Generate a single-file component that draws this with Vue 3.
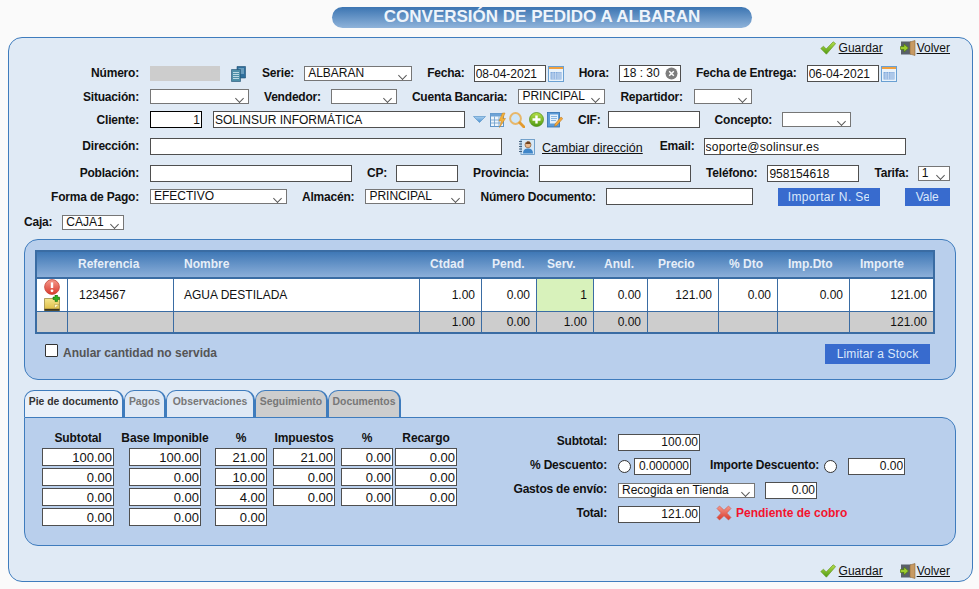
<script setup>
const columns = [
  { label: '', width: 31 }, { label: 'Referencia', width: 106 }, { label: 'Nombre', width: 246 },
  { label: 'Ctdad', width: 62 }, { label: 'Pend.', width: 55 }, { label: 'Serv.', width: 57 },
  { label: 'Anul.', width: 54 }, { label: 'Precio', width: 71 }, { label: '% Dto', width: 59 },
  { label: 'Imp.Dto', width: 72 }, { label: 'Importe', width: 83 }
]
const totals = ['1.00', '0.00', '1.00', '0.00', '', '', '', '121.00']
const tabs = [
  { label: 'Pie de documento', cls: 't-active' }, { label: 'Pagos', cls: 't-open' },
  { label: 'Observaciones', cls: 't-open' }, { label: 'Seguimiento', cls: 't-off' },
  { label: 'Documentos', cls: 't-off' }
]
const taxHead = ['Subtotal', 'Base Imponible', '%', 'Impuestos', '%', 'Recargo']
const taxCls = ['c72', 'c72', 'c52', 'c62', 'c52', 'c62']
const taxRows = [
  ['100.00', '100.00', '21.00', '21.00', '0.00', '0.00'],
  ['0.00', '0.00', '10.00', '0.00', '0.00', '0.00'],
  ['0.00', '0.00', '4.00', '0.00', '0.00', '0.00'],
  ['0.00', '0.00', '0.00']
]
</script>

<template>
  <div class="page">
    <svg class="defs" aria-hidden="true">
      <defs>
        <linearGradient id="gBlue" x1="0" y1="0" x2="0" y2="1"><stop offset="0" stop-color="#a9d0f0"/><stop offset="1" stop-color="#4a90d0"/></linearGradient>
        <linearGradient id="gGreen" x1="0" y1="0" x2="0" y2="1"><stop offset="0" stop-color="#b6e04a"/><stop offset="1" stop-color="#4f9a12"/></linearGradient>
        <linearGradient id="gRed" x1="0" y1="0" x2="0" y2="1"><stop offset="0" stop-color="#f59a8c"/><stop offset="1" stop-color="#d9392c"/></linearGradient>
        <linearGradient id="gNote" x1="0" y1="0" x2="0" y2="1"><stop offset="0" stop-color="#f5e68c"/><stop offset="1" stop-color="#dcb940"/></linearGradient>
      </defs>
      <symbol id="i-check" viewBox="0 0 16 14">
        <path d="M0.8 7.5 3.5 5.2 6.2 8 13.2 0.8 15.6 2.6 6.4 13.2Z" fill="url(#gGreen)" stroke="#6a9a2a" stroke-width=".7"/>
      </symbol>
      <symbol id="i-door" viewBox="0 0 16 16">
        <rect x="1" y="1.5" width="10" height="13" fill="#59606a"/>
        <path d="M10 2 15 0.5V15.5L10 14Z" fill="#c79a63" stroke="#8f6a3a" stroke-width=".6"/>
        <path d="M0.5 6.5H4V4L8.5 8 4 12V9.5H0.5Z" fill="#9ccc2e" stroke="#4d7a10" stroke-width=".7"/>
      </symbol>
      <symbol id="i-cal" viewBox="0 0 16 16">
        <rect x=".5" y=".5" width="15" height="15" fill="#eaf3fb" stroke="#6aa0d2"/>
        <rect x="1" y="1" width="14" height="2" fill="#f0a040"/>
        <path d="M2.5 6H13.5V13.5H2.5Z" fill="#7fa9dc"/>
        <path d="M2.5 8H13.5M2.5 10H13.5M2.5 12H13.5M5 6V13.5M7.5 6V13.5M10 6V13.5M12 6V13.5" stroke="#dbe8f6" stroke-width=".6"/>
      </symbol>
    </svg>

    <h1 class="title">CONVERSIÓN DE PEDIDO A ALBARAN</h1>

    <section class="panel">
      <nav class="actions">
        <a class="act"><svg class="ic-check"><use href="#i-check"/></svg>Guardar</a>
        <a class="act"><svg class="ic-door"><use href="#i-door"/></svg>Volver</a>
      </nav>

      <div class="row r23 raised">
        <label class="lead">Número:</label>
        <div class="grey"></div>
        <svg class="ic-docs" viewBox="0 0 15 16">
          <path d="M6 .5H14.5V12H6Z" fill="#2f6f9c" stroke="#1f4f72" stroke-width=".6"/>
          <path d="M7.5 3H13M7.5 5H13M7.5 7H13" stroke="#bfe0ee" stroke-width=".8"/>
          <path d="M.5 3.5H9.5V15.5H.5Z" fill="#4d8fa8" stroke="#1f4f72" stroke-width=".6"/>
          <path d="M2 6.5H8M2 8.5H8M2 10.5H8M2 12.5H8" stroke="#d5ecf3" stroke-width=".8"/>
        </svg>
        <label class="lab l-serie">Serie:</label>
        <div class="sel w108">ALBARAN</div>
        <label class="lab tight">Fecha:</label>
        <input class="inp w72" value="08-04-2021" readonly />
        <svg class="ic-cal"><use href="#i-cal"/></svg>
        <label class="lab">Hora:</label>
        <div class="inp time w62"><span>18 : 30</span>
          <svg class="ic-clear" viewBox="0 0 13 13"><circle cx="6.5" cy="6.5" r="6" fill="#7d7d7d"/><path d="M4.2 4.2 8.8 8.8M8.8 4.2 4.2 8.8" stroke="#fff" stroke-width="1.5"/></svg>
        </div>
        <label class="lab">Fecha de Entrega:</label>
        <input class="inp w72" value="06-04-2021" readonly />
        <svg class="ic-cal"><use href="#i-cal"/></svg>
      </div>

      <div class="row r23">
        <label class="lead">Situación:</label>
        <div class="sel w99"></div>
        <label class="lab">Vendedor:</label>
        <div class="sel w66"></div>
        <label class="lab wide">Cuenta Bancaria:</label>
        <div class="sel w87">PRINCIPAL</div>
        <label class="lab wide">Repartidor:</label>
        <div class="sel w58"></div>
      </div>

      <div class="row r23">
        <label class="lead">Cliente:</label>
        <input class="inp w52 num strong" value="1" readonly />
        <input class="inp w252 gap11" value="SOLINSUR INFORMÁTICA" readonly />
        <svg class="ic-tri" viewBox="0 0 13 7"><path d="M.5.5H12.5L6.5 6.5Z" fill="url(#gBlue)" stroke="#5d97c9" stroke-width=".7"/></svg>
        <svg class="ic-16 ic-table" viewBox="0 0 16 16">
          <rect x=".5" y="1.5" width="13" height="13" fill="#eef5fb" stroke="#5f95c9"/>
          <rect x=".5" y="1.5" width="13" height="3" fill="#6ea3d6"/>
          <path d="M.5 8H13.5M.5 11H13.5M4.5 4.5V14.5M9 4.5V14.5" stroke="#6a9ccc" stroke-width=".8"/>
          <path d="M12.5 1 9 9H11.5L9.5 15.5 15.5 6.5H12.8L15 1Z" fill="#f3b23c" stroke="#c9801c" stroke-width=".5"/>
        </svg>
        <svg class="ic-16 ic-mag" viewBox="0 0 16 16">
          <circle cx="6.5" cy="6.5" r="5.4" fill="#cfe6f8" stroke="#e7b76a" stroke-width="2"/>
          <path d="M10.8 10.8 15 15" stroke="#e39a2e" stroke-width="2.8" stroke-linecap="round"/>
        </svg>
        <svg class="ic-plus" viewBox="0 0 15 15">
          <circle cx="7.5" cy="7.5" r="7" fill="url(#gGreen)" stroke="#4b8a12" stroke-width=".7"/>
          <path d="M7.5 3.5V11.5M3.5 7.5H11.5" stroke="#fff" stroke-width="2.4"/>
        </svg>
        <svg class="ic-16 ic-note" viewBox="0 0 16 16">
          <rect x=".5" y=".5" width="12" height="14.5" fill="#5b9bd8" stroke="#2f6fae" stroke-width=".8"/>
          <rect x="3" y="2.5" width="8" height="9" fill="#e4f0fa"/>
          <path d="M4 4.5H10M4 6.5H10M4 8.5H9" stroke="#5b9bd8" stroke-width=".7"/>
          <path d="M8 12 14 5 15.8 6.6 9.8 13.5 7.6 14.4Z" fill="#f2a93b" stroke="#b9711b" stroke-width=".5"/>
        </svg>
        <label class="lab l-cif">CIF:</label>
        <input class="inp w92" readonly />
        <label class="lab">Concepto:</label>
        <div class="sel w69"></div>
      </div>

      <div class="row r31 raised">
        <label class="lead">Dirección:</label>
        <input class="inp w352" readonly />
        <svg class="ic-16 ic-addr" viewBox="0 0 16 16">
          <rect x="2" y=".5" width="13.5" height="15" fill="#d6e8f7" stroke="#5a8fc0" stroke-width=".8"/>
          <path d="M0 2.5H3M0 5H3M0 7.5H3M0 10H3M0 12.5H3" stroke="#44617c" stroke-width="1"/>
          <circle cx="9" cy="5.8" r="3" fill="#e9b98f" stroke="#7a4a24" stroke-width=".6"/>
          <path d="M8.2 2.6H10.6L11.6 5H6.6Z" fill="#6d4221"/>
          <path d="M4 14.5C4 10.5 6.5 9.5 9 9.5S14 10.5 14 14.5Z" fill="#3f86c9"/>
        </svg>
        <a class="link">Cambiar dirección</a>
        <label class="lab l-email tight">Email:</label>
        <input class="inp w202 mail" value="soporte@solinsur.es" readonly />
      </div>

      <div class="row r23 raised">
        <label class="lead">Población:</label>
        <input class="inp w202" readonly />
        <label class="lab tight">CP:</label>
        <input class="inp w62" readonly />
        <label class="lab">Provincia:</label>
        <input class="inp w152" readonly />
        <label class="lab">Teléfono:</label>
        <input class="inp w92" value="958154618" readonly />
        <label class="lab tight">Tarifa:</label>
        <div class="sel w32">1</div>
      </div>

      <div class="row r23">
        <label class="lead">Forma de Pago:</label>
        <div class="sel w137">EFECTIVO</div>
        <label class="lab wide">Almacén:</label>
        <div class="sel w100">PRINCIPAL</div>
        <label class="lab">Número Documento:</label>
        <input class="inp w147" readonly />
        <button class="btn b-imp"><span>Importar N. Serie</span></button>
        <button class="btn b-vale">Vale</button>
      </div>

      <div class="row r28">
        <label class="lab l-caja">Caja:</label>
        <div class="sel w62">CAJA1</div>
      </div>

      <section class="box lines">
        <table class="grid">
          <colgroup><col v-for="c in columns" :key="c.label" :style="{ width: c.width + 'px' }" /></colgroup>
          <thead>
            <tr><th v-for="c in columns" :key="c.label">{{ c.label }}</th></tr>
          </thead>
          <tbody>
            <tr class="item">
              <td class="flags">
                <svg class="ic-alert" viewBox="0 0 16 16">
                  <circle cx="8" cy="8" r="7.4" fill="url(#gRed)" stroke="#c5463a" stroke-width=".8"/>
                  <path d="M8 3.4V9" stroke="#fff" stroke-width="2.4"/><circle cx="8" cy="11.8" r="1.4" fill="#fff"/>
                </svg>
                <svg class="ic-addnote" viewBox="0 0 16 16">
                  <path d="M0.5 3.5H15.5V15.5H0.5Z" fill="url(#gNote)" stroke="#7c6a1c" stroke-width=".6"/>
                  <path d="M0.5 13.8H15.5V15.8H0.5Z" fill="#3c3520"/>
                  <path d="M10.5 13.5 15 9.5 10.5 9.5Z" fill="#fff6c8" stroke="#a08a30" stroke-width=".4"/>
                  <path d="M11 0H13.5V2H15.5V4.5H13.5V6.5H11V4.5H9V2H11Z" fill="#2fae1e" stroke="#0d5a0a" stroke-width=".5"/>
                </svg>
              </td>
              <td class="txt first">1234567</td>
              <td class="txt">AGUA DESTILADA</td>
              <td class="n">1.00</td>
              <td class="n">0.00</td>
              <td class="n serv">1</td>
              <td class="n">0.00</td>
              <td class="n">121.00</td>
              <td class="n">0.00</td>
              <td class="n">0.00</td>
              <td class="n">121.00</td>
            </tr>
            <tr class="sum">
              <td></td><td></td><td></td>
              <td v-for="(t, i) in totals" :key="i" class="n">{{ t }}</td>
            </tr>
          </tbody>
        </table>
        <div class="below">
          <label class="cancel"><span class="check"></span>Anular cantidad no servida</label>
          <button class="btn b-limit">Limitar a Stock</button>
        </div>
      </section>

      <div class="tabs">
        <div v-for="t in tabs" :key="t.label" class="tab" :class="t.cls">{{ t.label }}</div>
      </div>

      <section class="box foot">
        <div class="taxes">
          <div v-for="(h, i) in taxHead" :key="i" class="tax-h" :class="taxCls[i]"><span>{{ h }}</span></div>
          <template v-for="(r, ri) in taxRows" :key="ri">
            <input v-for="(v, i) in r" :key="i" class="inp num tax" :class="taxCls[i]" :value="v" readonly />
          </template>
        </div>
        <div class="sums">
          <div class="s-row">
            <label class="s-lab">Subtotal:</label>
            <input class="inp num w82 sum-inp" value="100.00" readonly />
          </div>
          <div class="s-row">
            <label class="s-lab">% Descuento:</label>
            <span class="radio"></span>
            <input class="inp num w57 sum-inp r-dto" value="0.000000" readonly />
            <label class="lab l-imp">Importe Descuento:</label>
            <span class="radio r2"></span>
            <input class="inp num w57 sum-inp" value="0.00" readonly />
          </div>
          <div class="s-row">
            <label class="s-lab">Gastos de envío:</label>
            <div class="sel w137 s-env">Recogida en Tienda</div>
            <input class="inp num w52 sum-inp" value="0.00" readonly />
          </div>
          <div class="s-row">
            <label class="s-lab">Total:</label>
            <input class="inp num w82 sum-inp" value="121.00" readonly />
            <svg class="ic-x" viewBox="0 0 16 16">
              <path d="M1 3.5 3.5 1 8 5.2 12.5 1 15 3.5 10.8 8 15 12.5 12.5 15 8 10.8 3.5 15 1 12.5 5.2 8Z" fill="url(#gRed)" stroke="#d0584c" stroke-width=".6"/>
            </svg>
            <span class="pending">Pendiente de cobro</span>
          </div>
        </div>
      </section>

      <nav class="actions bottom">
        <a class="act"><svg class="ic-check"><use href="#i-check"/></svg>Guardar</a>
        <a class="act"><svg class="ic-door"><use href="#i-door"/></svg>Volver</a>
      </nav>
    </section>
  </div>
</template>

<style>
html, body { margin: 0; background: #fafafa; }
</style>

<style scoped>
* { box-sizing: border-box; }
.page {
  width: 979px; height: 589px; overflow: hidden; padding-top: 7px;
  background: #fafafa; color: #111;
  font-family: "Liberation Sans", Arial, sans-serif; font-size: 12px;
}
.defs { position: absolute; width: 0; height: 0; }
.title {
  width: 420px; height: 21px; margin: 0 0 0 332px; border-radius: 11px;
  background: linear-gradient(#3c75b2, #8fb3da);
  color: #eef4fb; font-size: 17px; font-weight: bold; line-height: 20px; text-align: center;
}
.panel {
  width: 965px; height: 545px; margin: 9px 0 0 8px;
  border: 1px solid #3f7cbd; border-radius: 14px; background: #e0eaf5;
}
.actions { display: flex; justify-content: flex-end; gap: 17px; height: 24px; padding: 2px 22px 0 0; }
.actions.bottom { height: 20px; padding-top: 0; margin-top: 17px; }
.act { display: flex; align-items: center; height: 16px; font-size: 12px; color: #111; text-decoration: underline; }
.ic-check { width: 16px; height: 14px; margin-right: 3px; }
.ic-door { width: 16px; height: 16px; margin-right: 1px; }

.row { display: flex; align-items: center; }
.r23 { height: 23px; }
.r28 { height: 28px; }
.r31 { height: 31px; }
.lead { width: 130px; margin-right: 11px; font-weight: bold; text-align: right; white-space: nowrap; letter-spacing: -.2px; }
.lab { margin-left: 15px; margin-right: 10px; font-weight: bold; white-space: nowrap; letter-spacing: -.2px; }
.raised .lead, .raised .lab { margin-top: -2px; }
.tight { margin-right: 9px; }
.wide { margin-right: 11px; }
.l-serie { margin-left: 16px; }
.l-cif { margin-right: 7px; }
.l-email { margin-left: 17px; }

.grey { width: 70px; height: 15px; background: #cdcdcd; }
.inp {
  height: 17px; padding: 0 1px; border: 1px solid #4f4f4f; background: #fff; color: #111;
  font-family: inherit; font-size: 12px; line-height: 15px; outline: none; border-radius: 0;
}
.num { text-align: right; }
.mail { letter-spacing: .25px; }
.strong { border-color: #000; }
.gap11 { margin-left: 11px; }
.sel {
  position: relative; height: 15px; padding-left: 3px; border: 1px solid #767676; background: #fff;
  font-size: 12px; line-height: 13px; color: #111; white-space: nowrap;
}
.sel::after {
  content: ""; position: absolute; right: 5px; top: 5px; width: 6px; height: 6px;
  border-right: 1px solid #555; border-bottom: 1px solid #555; transform: rotate(45deg) scale(.9);
}
.w32 { width: 32px; } .w52 { width: 52px; } .w57 { width: 57px; } .w58 { width: 58px; }
.w62 { width: 62px; } .w66 { width: 66px; } .w69 { width: 69px; }
.w72 { width: 72px; } .w82 { width: 82px; } .w87 { width: 87px; } .w92 { width: 92px; }
.w99 { width: 99px; } .w100 { width: 100px; } .w108 { width: 108px; }
.w137 { width: 137px; } .w147 { width: 147px; } .w152 { width: 152px; } .w202 { width: 202px; }
.w252 { width: 252px; } .w352 { width: 352px; }
.c72 { width: 72px; } .c52 { width: 52px; } .c62 { width: 62px; }

.time { display: flex; align-items: center; justify-content: space-between; padding: 0 2px 0 3px; }
.ic-clear { width: 13px; height: 13px; }
.ic-docs { width: 15px; height: 16px; margin-left: 11px; }
.ic-cal { width: 16px; height: 16px; margin-left: 2px; }
.ic-tri { width: 13px; height: 7px; margin-left: 8px; }
.ic-16 { width: 16px; height: 16px; }
.ic-table { margin-left: 4px; }
.ic-mag { margin-left: 3px; }
.ic-plus { width: 15px; height: 15px; margin-left: 4px; }
.ic-note { margin-left: 3px; }
.ic-addr { margin-left: 17px; }
.link { margin-left: 7px; font-size: 12.5px; color: #111; text-decoration: underline; position: relative; top: 1px; }

.btn {
  height: 18px; padding: 0; border: 0; border-radius: 0; background: #386bce; color: #dbe8fb;
  font-family: inherit; font-size: 12px; line-height: 18px;
}
.b-imp { width: 102px; margin-left: 25px; padding: 0 11px 0 10px; overflow: hidden; text-align: left; letter-spacing: .35px; }
.b-imp span { display: block; overflow: hidden; white-space: nowrap; }
.b-vale { width: 45px; margin-left: 25px; }
.b-limit { width: 105px; height: 20px; letter-spacing: .15px; }

.box { border: 1px solid #3f7cbd; background: #b9cfec; }
.lines { width: 932px; height: 141px; margin: 3px 0 0 15px; padding: 10px 0 0 10px; border-radius: 14px; }
.grid {
  width: 900px; table-layout: fixed; border-collapse: separate; border-spacing: 0;
  border: 2px solid #3a6ca3; background: #fff; font-size: 12px;
}
.grid th {
  height: 27px; padding: 0 0 2px 10px; border-bottom: 2px solid #3a6ca3; text-align: left;
  background: linear-gradient(#3f78b6, #8cafd9); color: #e6eef8; font-weight: bold;
}
.grid td { padding: 0; border-right: 1px solid #3a6ca3; border-bottom: 1px solid #3a6ca3; }
.grid td:last-child { border-right: 0; }
.grid tr:last-child td { border-bottom: 0; }
.item td { height: 33px; }
.sum td { height: 20px; background: #cdcdcd; }
.txt { padding-left: 10px !important; }
.txt.first { padding-left: 11px !important; }
.n { padding-right: 6px !important; text-align: right; }
.serv { background: #d8f2bb; }
.flags { position: relative; }
.ic-alert { position: absolute; left: 7px; top: 0; width: 16px; height: 16px; }
.ic-addnote { position: absolute; left: 7px; top: 16px; width: 16px; height: 16px; }
.below { display: flex; justify-content: space-between; align-items: flex-start; padding: 10px 25px 0 10px; }
.cancel { display: flex; align-items: flex-start; line-height: 18px; color: #555; font-weight: bold; }
.check { width: 13px; height: 13px; margin-right: 5px; border: 1px solid #333; background: #fff; border-radius: 1px; }

.tabs { display: flex; height: 27px; margin: 10px 0 0 15px; position: relative; z-index: 1; }
.tab {
  height: 27px; padding-top: 5px; border: 1px solid #3f7cbd; border-bottom: 0; border-radius: 10px 10px 0 0;
  border-width: 1px 2px 0 1px; font-size: 10.4px; font-weight: bold; text-align: center; white-space: nowrap;
}
.tab:nth-child(1) { width: 100px; }
.tab:nth-child(2) { width: 42px; }
.tab:nth-child(3) { width: 89px; }
.tab:nth-child(4) { width: 73px; }
.tab:nth-child(5) { width: 73px; }
.t-active { background: #e9f0f9; color: #333; }
.t-open { background: #dfe9f5; color: #777; }
.t-off { background: #cdcdcd; color: #777; }

.foot {
  display: flex; width: 932px; height: 129px; margin-left: 15px; padding: 13px 0 0 17px;
  border-radius: 0 14px 14px 14px;
}
.taxes {
  display: grid; grid-template-columns: 87px 86px 58px 68px 54px 62px; grid-auto-rows: 20px;
  align-items: start; width: 415px; height: 100px; grid-template-rows: 17px;
}
.tax-h { display: flex; justify-content: center; font-weight: bold; white-space: nowrap; letter-spacing: -.1px; }
.tax { height: 18px; font-size: 13px; }
.sum-inp { font-size: 12px; }
.sums { margin-left: 43px; margin-top: -1px; }
.s-row { display: flex; align-items: center; height: 24px; }
.s-lab { width: 107px; margin-right: 11px; margin-top: -2px; font-weight: bold; text-align: right; white-space: nowrap; letter-spacing: -.2px; }
.radio { width: 13px; height: 13px; border: 1px solid #333; border-radius: 50%; background: #fff; }
.r-dto { margin-left: 3px; }
.l-imp { margin-left: 19px; margin-right: 5px; margin-top: -2px; }
.r2 { margin-right: 11px; }
.s-env { margin-right: 10px; }
.ic-x { width: 16px; height: 16px; margin-left: 16px; margin-top: -2px; }
.pending { margin-left: 4px; margin-top: -2px; color: #f3142e; font-weight: bold; }
</style>
